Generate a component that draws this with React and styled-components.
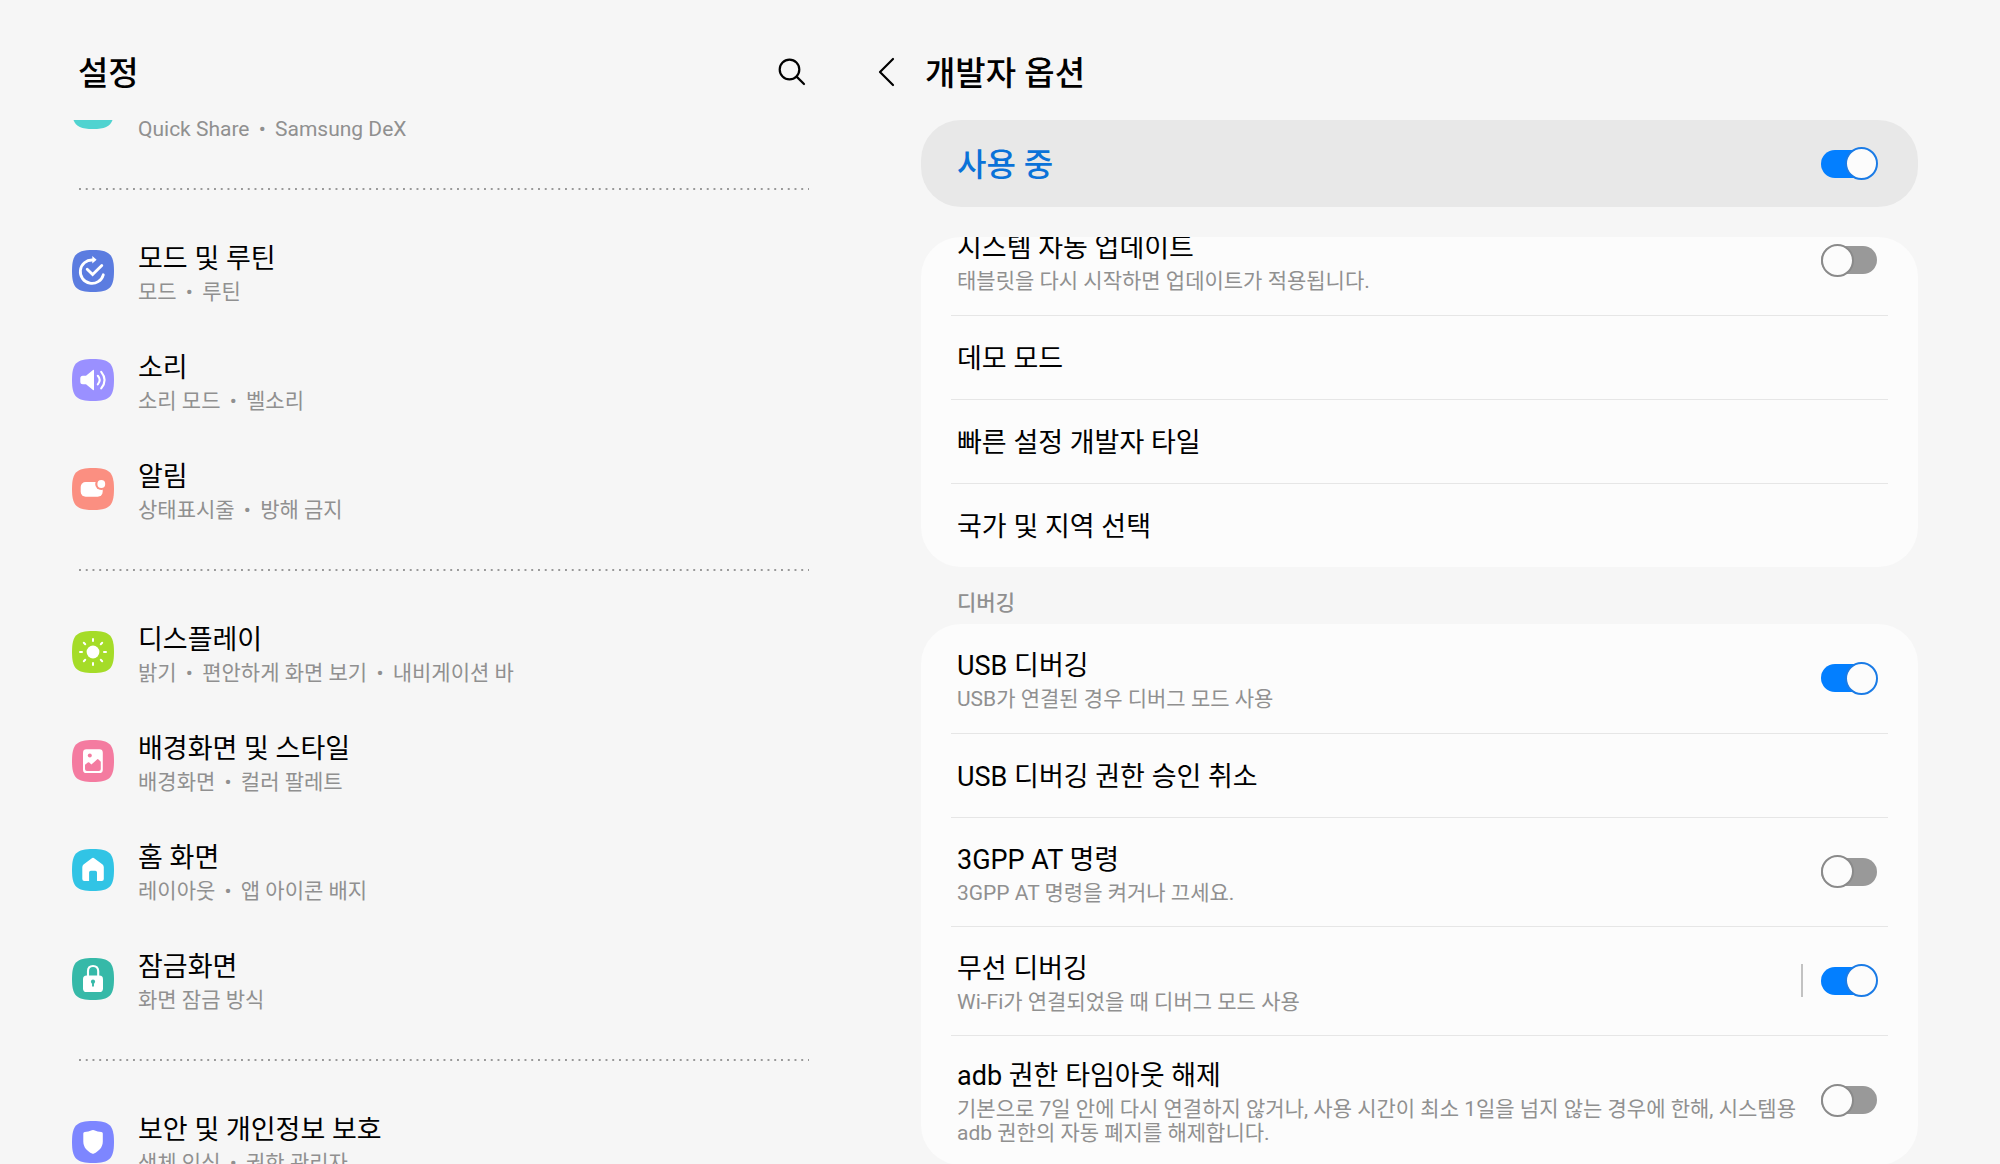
import React, { useLayoutEffect, useRef, useState } from "react";
import styled, { createGlobalStyle } from "styled-components";

const GlobalStyle = createGlobalStyle`
  * { box-sizing: border-box; }
  body {
    margin: 0;
    background: #f6f6f6;
    color: #000;
    font-family: Roboto, "Noto Sans CJK KR", sans-serif;
  }
  h1, h2, p, ul { margin: 0; padding: 0; }
`;

const Shell = styled.div`
  display: grid;
  grid-template-columns: minmax(0, 17fr) minmax(0, 23fr);
  height: 100vh;
  overflow: hidden;
`;

const Pane = styled.section`
  display: flex;
  flex-direction: column;
  min-height: 0;
`;

const MenuPane = styled(Pane)`
  padding: 0 41px 0 72px;
`;

const DetailPane = styled(Pane)`
  padding: 0 82px 0 71px;
`;

const Header = styled.header`
  display: flex;
  align-items: center;
  flex: none;
  height: 120px;
  padding-top: 26px;
  padding-bottom: 2px;
`;

const MenuHeader = styled(Header)`
  justify-content: space-between;
  padding-left: 6px;
`;

const DetailHeader = styled(Header)`
  gap: 24px;
  margin-left: -50px;
`;

const Heading = styled.h1`
  && { padding-top: 4px; }
  font-size: 33px;
  line-height: 44px;
  font-weight: 500;
`;

const IconButton = styled.button`
  display: flex;
  padding: 0;
  border: 0;
  background: none;
  color: #000;
  cursor: pointer;
`;

const Scroller = styled.div`
  flex: 1;
  min-height: 0;
  overflow-y: auto;
  scrollbar-width: none;
  border-radius: ${(p) => (p.$round ? "40px 40px 0 0" : "0")};
`;

const MenuList = styled.nav`
  display: flex;
  flex-direction: column;
  padding-bottom: 80px;
`;

const MenuRow = styled.a`
  display: flex;
  align-items: center;
  gap: 24px;
  min-height: 109px;
  color: inherit;
  text-decoration: none;
`;

const AppIcon = styled.svg`
  flex: none;
  width: 42px;
  height: 42px;
`;

const Dots = styled.hr`
  flex: none;
  height: 2px;
  margin: 26px 0 26px 7px;
  border: 0;
  background: linear-gradient(to right, #999 2px, transparent 2px) left top / calc(100% / 108) 2px repeat-x;
`;

const Texts = styled.span`
  display: flex;
  flex-direction: column;
  flex: 1;
  min-width: 0;
`;

const Title = styled.span`
  font-size: 27px;
  line-height: 42px;
`;

const Summary = styled.span`
  font-size: 21px;
  line-height: 24px;
  color: #909090;
  word-break: keep-all;
`;

const Bullet = styled.span`
  margin: 0 4px;
`;

const MasterBar = styled.div`
  display: flex;
  align-items: center;
  justify-content: space-between;
  flex: none;
  height: 87px;
  margin-bottom: 30px;
  padding: 0 40px 0 36px;
  border-radius: 40px;
  background: #e8e8e8;
`;

const MasterLabel = styled.label`
  padding-top: 2px;
  font-size: 32px;
  line-height: 40px;
  font-weight: 500;
  color: #0a72d8;
`;

const Card = styled.div`
  display: flex;
  flex-direction: column;
  padding: 0 30px;
  border-radius: 40px;
  background: #fcfcfc;
`;

const Row = styled.div`
  display: flex;
  align-items: center;
  width: 100%;
  min-height: ${(p) => (p.$tall ? "109px" : "84px")};
  padding: ${(p) => (p.$tall ? "19px 10px 20px 6px" : "20px 10px 18px 6px")};
  border: 0;
  border-top: 1px solid #e6e6e6;
  background: none;
  color: inherit;
  font: inherit;
  text-align: left;
  &:first-child { border-top: 0; }
`;

const RowLabel = styled(Texts)`
  margin-right: 24px;
`;

const GroupTitle = styled.h2`
  && { padding: 24px 36px 9px; }
  font-size: 21px;
  line-height: 24px;
  font-weight: 500;
  color: #909090;
`;

const Bar = styled.span`
  flex: none;
  width: 2px;
  height: 33px;
  margin-right: 18px;
  background: #c2c2c2;
`;

const Switch = styled.input.attrs({ type: "checkbox", role: "switch" })`
  appearance: none;
  display: grid;
  align-items: center;
  flex: none;
  width: 57px;
  height: 33px;
  margin: 0;
  cursor: pointer;
  &::before {
    content: "";
    grid-area: 1 / 1;
    height: 28px;
    margin-right: 1px;
    border-radius: 14px;
    background: #999;
  }
  &::after {
    content: "";
    grid-area: 1 / 1;
    box-sizing: border-box;
    width: 33px;
    height: 33px;
    border: 2px solid #8a8a8a;
    border-radius: 50%;
    background: #fcfcfc;
  }
  &:checked::before { background: #037fff; }
  &:checked::after {
    justify-self: end;
    border-color: #1a7be6;
  }
`;

const SQUIRCLE = "M21 0C37.5 0 42 4.5 42 21S37.5 42 21 42 0 37.5 0 21 4.5 0 21 0Z";

const RAYS = [0, 45, 90, 135, 180, 225, 270, 315];

const glyphs = {
  devices: { color: "#50d3d0", art: null },
  modes: {
    color: "#5b7ce0",
    art: (
      <>
        <g fill="none" stroke="#fff" strokeWidth="2.8" strokeLinecap="round">
          <path d="M20.5 10A11.7 11.7 0 1 0 31.3 24.8" />
          <path d="M15.2 19.2 20.6 24.6 29.8 15.4" />
        </g>
        <path d="M20.3 6 24.6 9.8 20.3 13.6Z" fill="#fff" />
      </>
    ),
  },
  sound: {
    color: "#9a90ff",
    art: (
      <>
        <path d="M10.8 16.8H14L21 10.9Q22 10.4 22 11.4V30.6Q22 31.6 21 31.1L14 25.2H10.8Q8.3 25.2 8.3 22.7V19.3Q8.3 16.8 10.8 16.8Z" fill="#fff" />
        <g fill="none" stroke="#fff" strokeWidth="2.1" strokeLinecap="round">
          <path d="M25.8 16.8Q29.6 21 25.8 25.4" />
          <path d="M29.2 12.8Q36 21 29.2 29.4" />
        </g>
      </>
    ),
  },
  notice: {
    color: "#fb8f81",
    art: (
      <>
        <rect x="8.7" y="14" width="22" height="14.8" rx="5" fill="#fff" />
        <circle cx="29.3" cy="16" r="6.1" fill="#fb8f81" />
        <circle cx="29.3" cy="16" r="3.9" fill="#fff" />
      </>
    ),
  },
  display: {
    color: "#a5dc28",
    art: (
      <>
        <circle cx="21" cy="21" r="6.4" fill="#fff" />
        <g stroke="#fff" strokeWidth="2" strokeLinecap="round">
          {RAYS.map((a) => (
            <path key={a} d="M21 8V10" transform={`rotate(${a} 21 21)`} />
          ))}
        </g>
      </>
    ),
  },
  wallpaper: {
    color: "#f47ba0",
    art: (
      <>
        <rect x="11" y="9.3" width="19.8" height="23.8" rx="3.4" fill="#fff" />
        <circle cx="17.8" cy="15.4" r="2" fill="#f47ba0" />
        <path d="M13 24.8 15.8 22.4Q16.6 21.9 17.3 22.5L19.4 24.6 25 19.4Q25.8 18.8 26.5 19.4L28.8 21.8V29Q28.8 31 26.8 31H15Q13 31 13 29Z" fill="#f47ba0" />
      </>
    ),
  },
  home: {
    color: "#31c4e5",
    art: (
      <path d="M19.5 9.5Q21 8.2 22.5 9.5L30.6 15.6Q31.8 16.6 31.8 18.2V30Q31.8 32 29.8 32H25V23.4Q25 21.7 23.3 21.7H18.8Q17.1 21.7 17.1 23.4V32H12.3Q10.3 32 10.3 30V18.2Q10.3 16.6 11.5 15.6Z" fill="#fff" />
    ),
  },
  lock: {
    color: "#36b9a8",
    art: (
      <>
        <path d="M16 19V13Q16 8 21 8T26.2 13V19" fill="none" stroke="#fff" strokeWidth="2.1" />
        <rect x="11" y="17.6" width="20" height="16.4" rx="3.6" fill="#fff" />
        <circle cx="21" cy="23.7" r="2.1" fill="#36b9a8" />
        <path d="M21 24V28.4" stroke="#36b9a8" strokeWidth="1.9" />
      </>
    ),
  },
  privacy: {
    color: "#7d86ff",
    art: (
      <path d="M19.8 9.3Q21 8.7 22.2 9.3 25.5 10.8 29.4 11 30.8 11.2 30.8 12.6V20.5C30.8 26.5 26.5 30.4 22 32.5Q21 33 20 32.5C15.5 30.4 11.3 26.5 11.3 20.5V12.6Q11.3 11.2 12.7 11 16.5 10.8 19.8 9.3Z" fill="#fff" />
    ),
  },
};

const menu = [
  [{ icon: "devices", title: "연결된 기기", parts: ["Quick Share", "Samsung DeX"] }],
  [
    { icon: "modes", title: "모드 및 루틴", parts: ["모드", "루틴"] },
    { icon: "sound", title: "소리", parts: ["소리 모드", "벨소리"] },
    { icon: "notice", title: "알림", parts: ["상태표시줄", "방해 금지"] },
  ],
  [
    { icon: "display", title: "디스플레이", parts: ["밝기", "편안하게 화면 보기", "내비게이션 바"] },
    { icon: "wallpaper", title: "배경화면 및 스타일", parts: ["배경화면", "컬러 팔레트"] },
    { icon: "home", title: "홈 화면", parts: ["레이아웃", "앱 아이콘 배지"] },
    { icon: "lock", title: "잠금화면", parts: ["화면 잠금 방식"] },
  ],
  [{ icon: "privacy", title: "보안 및 개인정보 보호", parts: ["생체 인식", "권한 관리자"] }],
];

const general = [
  { id: "auto-update", title: "시스템 자동 업데이트", summary: "태블릿을 다시 시작하면 업데이트가 적용됩니다.", on: false },
  { id: "demo", title: "데모 모드" },
  { id: "tiles", title: "빠른 설정 개발자 타일" },
  { id: "region", title: "국가 및 지역 선택" },
];

const debugging = [
  { id: "usb", title: "USB 디버깅", summary: "USB가 연결된 경우 디버그 모드 사용", on: true },
  { id: "revoke", title: "USB 디버깅 권한 승인 취소" },
  { id: "at", title: "3GPP AT 명령", summary: "3GPP AT 명령을 켜거나 끄세요.", on: false },
  { id: "wireless", title: "무선 디버깅", summary: "Wi-Fi가 연결되었을 때 디버그 모드 사용", on: true, split: true },
  {
    id: "adb-timeout",
    title: "adb 권한 타임아웃 해제",
    summary: "기본으로 7일 안에 다시 연결하지 않거나, 사용 시간이 최소 1일을 넘지 않는 경우에 한해, 시스템용 adb 권한의 자동 폐지를 해제합니다.",
    on: false,
  },
];

function useInitialScroll(top) {
  const ref = useRef(null);
  useLayoutEffect(() => {
    ref.current.scrollTop = top;
  }, [top]);
  return ref;
}

function MenuItem({ icon, title, parts }) {
  const { color, art } = glyphs[icon];
  return (
    <MenuRow href="#">
      <AppIcon viewBox="0 0 42 42" aria-hidden="true">
        <path d={SQUIRCLE} fill={color} />
        {art}
      </AppIcon>
      <Texts>
        <Title>{title}</Title>
        <Summary>
          {parts.map((part, i) => (
            <React.Fragment key={part}>
              {i > 0 && <> <Bullet>•</Bullet> </>}
              {part}
            </React.Fragment>
          ))}
        </Summary>
      </Texts>
    </MenuRow>
  );
}

function Option({ id, title, summary, on, split }) {
  const [checked, setChecked] = useState(on);
  if (on === undefined) {
    return (
      <Row as="button" type="button">
        <Title>{title}</Title>
      </Row>
    );
  }
  return (
    <Row $tall>
      <RowLabel as="label" htmlFor={id}>
        <Title>{title}</Title>
        <Summary>{summary}</Summary>
      </RowLabel>
      {split && <Bar />}
      <Switch id={id} checked={checked} onChange={() => setChecked(!checked)} />
    </Row>
  );
}

export default function App() {
  const menuRef = useInitialScroll(67);
  const detailRef = useInitialScroll(31);
  const [enabled, setEnabled] = useState(true);

  return (
    <>
      <GlobalStyle />
      <Shell>
        <MenuPane>
          <MenuHeader>
            <Heading>설정</Heading>
            <IconButton type="button" aria-label="검색">
              <svg width="34" height="34" viewBox="0 0 34 34" fill="none" stroke="currentColor" strokeWidth="2.2" strokeLinecap="round">
                <circle cx="14.5" cy="14.5" r="9.8" />
                <path d="M21.6 21.6 29 29" />
              </svg>
            </IconButton>
          </MenuHeader>
          <Scroller ref={menuRef}>
            <MenuList>
              {menu.map((group, g) => (
                <React.Fragment key={g}>
                  {g > 0 && <Dots />}
                  {group.map((item) => (
                    <MenuItem key={item.icon} {...item} />
                  ))}
                </React.Fragment>
              ))}
            </MenuList>
          </Scroller>
        </MenuPane>

        <DetailPane>
          <DetailHeader>
            <IconButton type="button" aria-label="뒤로">
              <svg width="30" height="34" viewBox="0 0 30 34" fill="none" stroke="currentColor" strokeWidth="2.2" strokeLinecap="round" strokeLinejoin="round">
                <path d="M22 4 9 17 22 30" />
              </svg>
            </IconButton>
            <Heading as="h2">개발자 옵션</Heading>
          </DetailHeader>
          <MasterBar>
            <MasterLabel htmlFor="developer">사용 중</MasterLabel>
            <Switch id="developer" checked={enabled} onChange={() => setEnabled(!enabled)} />
          </MasterBar>
          <Scroller ref={detailRef} $round>
            <Card>
              {general.map((o) => (
                <Option key={o.id} {...o} />
              ))}
            </Card>
            <GroupTitle>디버깅</GroupTitle>
            <Card>
              {debugging.map((o) => (
                <Option key={o.id} {...o} />
              ))}
            </Card>
          </Scroller>
        </DetailPane>
      </Shell>
    </>
  );
}
